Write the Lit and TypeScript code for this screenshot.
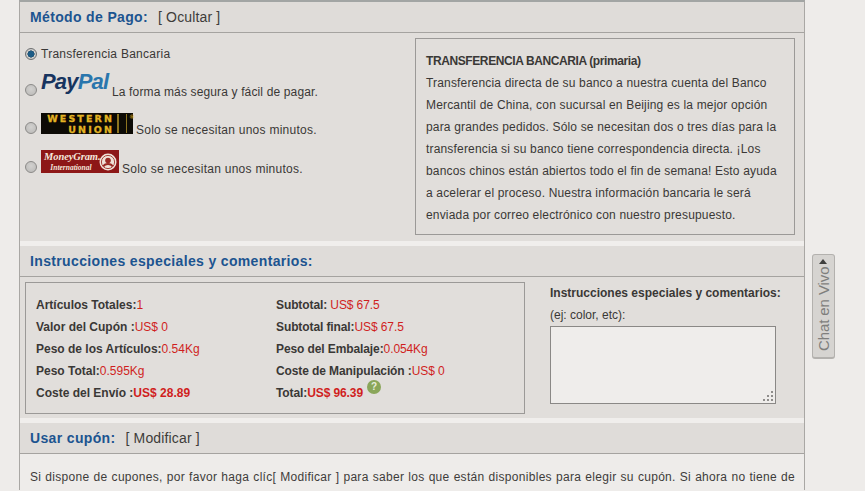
import { LitElement, html, css } from "lit";
import { customElement } from "lit/decorators.js";

@customElement("app-root")
export class AppRoot extends LitElement {
  static styles = css`
    :host {
      display: block;
      position: relative;
      width: 865px;
      height: 491px;
      overflow: hidden;
      background: #eeecea;
      font-family: "Liberation Sans", Arial, sans-serif;
      font-size: 12px;
      color: #3a3836;
    }
    .page {
      width: 786px;
      margin-left: 19px;
      border-left: 1px solid #a9a7a4;
      border-right: 1px solid #a9a7a4;
      border-top: 2px solid #a2a5a4;
      box-sizing: border-box;
    }
    .head {
      box-sizing: border-box;
      border-bottom: 1px solid #a5a3a0;
      background: #dfdcd9;
      display: flex;
      align-items: center;
      padding-left: 10px;
      height: 31px;
    }
    .head h2 {
      margin: 0;
      font-size: 14px;
      font-weight: bold;
      color: #1c5490;
      letter-spacing: 0.35px;
    }
    .head a {
      margin-left: 10px;
      font-size: 14px;
      letter-spacing: 0.15px;
      color: #3e3c3a;
    }
    .body {
      background: #e1dedb;
    }
    .pay {
      display: flex;
      justify-content: space-between;
      height: 208px;
      box-sizing: border-box;
      padding: 5px 9px 5px 5px;
    }
    .methods {
      display: flex;
      flex-direction: column;
      padding-top: 10px;
    }
    .method {
      display: flex;
      align-items: flex-end;
      letter-spacing: 0.26px;
    }
    .method.m0 { height: 12px; align-items: center; }
    .method.m1 { margin-top: 11px; letter-spacing: 0.14px; }
    .method.m2 { margin-top: 17px; }
    .method.m3 { margin-top: 16px; }
    .method .t { margin-bottom: -3px; }
    input {
      appearance: none;
      width: 12px;
      height: 12px;
      margin: 0 4px 0 0;
      border-radius: 50%;
      border: 1px solid #8b8a88;
      box-sizing: border-box;
      background: radial-gradient(circle at 50% 40%, #d2d1cf 0, #b9b8b6 100%);
      flex: none;
    }
    input:checked {
      background: radial-gradient(circle, #1d5c86 0 2.8px, #123a55 3.3px, #d4d4d2 3.8px, #aeadab 100%);
      border-color: #6f7172;
    }
    .paypal {
      font-size: 22px;
      line-height: 22px;
      font-weight: bold;
      font-style: italic;
      color: #17345f;
      letter-spacing: -0.8px;
      width: 71px;
      flex: none;
      white-space: nowrap;
      margin-bottom: 3px;
    }
    .paypal span { color: #2a76ad; }
    .wu {
      flex: none;
      width: 92px;
      height: 21px;
      background: #0c0a05;
      color: #e3b323;
      font-family: "DejaVu Sans", sans-serif;
      font-weight: bold;
      font-size: 9.5px;
      line-height: 11px;
      letter-spacing: 2.1px;
      -webkit-text-stroke: 0.3px #e3b323;
      display: flex;
      margin-right: 3px;
      box-sizing: border-box;
      padding: 0 0 0 2px;
    }
    .wu .name { width: 71px; text-align: right; flex: none; margin-right: -2px; }
    .wu .bars {
      flex: none;
      margin-left: 5px;
      width: 10px;
      margin-top: 1px;
      height: 19px;
      box-sizing: border-box;
      border-left: 2px solid #8d7420;
      border-right: 1px solid #8d7420;
    }
    .wu .mark { font-size: 6px; line-height: 8px; margin-left: 2px; font-weight: normal; letter-spacing: 0; -webkit-text-stroke: 0; }
    .mg {
      flex: none;
      width: 78px;
      height: 23px;
      background: #8d1717;
      color: #f3e6dc;
      font-family: "Liberation Serif", serif;
      font-style: italic;
      font-weight: bold;
      display: flex;
      align-items: center;
      margin-right: 3px;
      box-sizing: border-box;
      padding-left: 3px;
      gap: 1px;
      letter-spacing: 0;
    }
    .mg .txt {
      width: 54px;
      text-align: center;
      font-size: 10.5px;
      line-height: 11.5px;
      letter-spacing: -0.1px;
      white-space: nowrap;
    }
    .mg .txt small { display: block; font-size: 7.5px; line-height: 9.5px; letter-spacing: 0; }
    .mg svg { flex: none; }
    .info {
      width: 380px;
      height: 197px;
      box-sizing: border-box;
      border: 1px solid #9b9997;
      padding: 11px 10px 0;
      line-height: 22px;
      letter-spacing: 0.17px;
      white-space: nowrap;
    }
    .info b { display: block; letter-spacing: -0.4px; }
    .strip { height: 5px; background: #f0eeec; }
    .notes {
      display: flex;
      height: 141px;
      box-sizing: border-box;
      padding: 5px 0 0 5px;
    }
    .stats {
      width: 500px;
      height: 132px;
      box-sizing: border-box;
      border: 1px solid #9b9997;
      padding: 11px 0 0 10px;
      display: grid;
      grid-template-columns: 240px 1fr;
      grid-auto-rows: 22px;
      align-items: center;
      font-weight: bold;
      white-space: nowrap;
    }
    .stats .r { letter-spacing: -0.1px; }
    .stats em { font-style: normal; font-weight: normal; color: #d01e1e; }
    .stats em.b { font-weight: bold; }
    .help {
      display: inline-block;
      width: 14px;
      height: 14px;
      margin: -6px 0 -6px 4px;
      border-radius: 50%;
      background: #8aa65a;
      color: #e8eddc;
      font-size: 10px;
      line-height: 14px;
      text-align: center;
      vertical-align: 7px;
      letter-spacing: 0;
    }
    .side {
      margin-left: 25px;
      width: 236px;
    }
    .side b, .side .hint {
      display: block;
      height: 22px;
      box-sizing: border-box;
      padding-top: 1px;
      line-height: 21px;
      white-space: nowrap;
    }
    .box { position: relative; width: 226px; height: 78px; }
    textarea {
      display: block;
      width: 226px;
      height: 78px;
      box-sizing: border-box;
      margin: 0;
      border: 1px solid #8a8886;
      background: #efedeb;
      border-radius: 0;
      resize: none;
    }
    .grip { position: absolute; right: 1px; bottom: 1px; }
    .coupon {
      background: #eeecea;
      padding: 12px 9px 0 10px;
      height: 36px;
      box-sizing: border-box;
      line-height: 22px;
      text-align: justify;
      text-align-last: justify;
      letter-spacing: 0.3px;
      color: #3e3c3a;
    }
    .chat {
      position: absolute;
      left: 812px;
      top: 254px;
      width: 23px;
      height: 105px;
      box-sizing: border-box;
      border: 1px solid #b3b1ae;
      border-top-width: 2px;
      border-radius: 3px;
      background: #d6d4d1;
      color: #7f7f7d;
      font-size: 15px;
      writing-mode: vertical-rl;
      transform: rotate(180deg);
      display: flex;
      align-items: center;
      justify-content: flex-start;
      white-space: nowrap;
      padding: 6px 0 0;
      letter-spacing: -0.1px;
    }
    .chat i {
      display: block;
      width: 0;
      height: 0;
      margin-top: 3px;
      border-top: 5px solid #3f3f3d;
      border-left: 4px solid transparent;
      border-right: 4px solid transparent;
    }
  `;

  render() {
    return html`
      <div class="page">
        <div class="head"><h2>Método de Pago:</h2><a>[ Ocultar ]</a></div>
        <div class="body pay">
          <div class="methods">
            <label class="method m0"><input type="radio" name="p" checked /><span>Transferencia Bancaria</span></label>
            <label class="method m1"><input type="radio" name="p" /><span class="paypal">Pay<span>Pal</span></span><span class="t">La forma más segura y fácil de pagar.</span></label>
            <label class="method m2"><input type="radio" name="p" /><span class="wu"><span class="name">WESTERN<br />UNION</span><span class="bars"></span><span class="mark">®</span></span><span class="t">Solo se necesitan unos minutos.</span></label>
            <label class="method m3"><input type="radio" name="p" /><span class="mg"><span class="txt">MoneyGram.<small>International</small></span>
              <svg width="18" height="18" viewBox="0 0 18 18"><circle cx="9" cy="9" r="8.5" fill="#efe3d8"/><circle cx="9" cy="9" r="6.6" fill="none" stroke="#a8443c" stroke-width="1"/><circle cx="9" cy="7.5" r="2.8" fill="#9a2a24"/><path d="M4.5 13.5c1.2-3.4 7.8-3.4 9 0" fill="none" stroke="#9a2a24" stroke-width="2"/></svg>
            </span><span class="t">Solo se necesitan unos minutos.</span></label>
          </div>
          <div class="info">
            <b>TRANSFERENCIA BANCARIA (primaria)</b>
            Transferencia directa de su banco a nuestra cuenta del Banco<br />
            Mercantil de China, con sucursal en Beijing es la mejor opción<br />
            para grandes pedidos. Sólo se necesitan dos o tres días para la<br />
            transferencia si su banco tiene correspondencia directa. ¡Los<br />
            bancos chinos están abiertos todo el fin de semana! Esto ayuda<br />
            a acelerar el proceso. Nuestra información bancaria le será<br />
            enviada por correo electrónico con nuestro presupuesto.
          </div>
        </div>
        <div class="strip"></div>
        <div class="head"><h2>Instrucciones especiales y comentarios:</h2></div>
        <div class="body notes">
          <div class="stats">
            <div>Artículos Totales:<em>1</em></div><div class="r">Subtotal: <em>US$ 67.5</em></div>
            <div>Valor del Cupón :<em>US$ 0</em></div><div class="r">Subtotal final:<em>US$ 67.5</em></div>
            <div>Peso de los Artículos:<em>0.54Kg</em></div><div class="r">Peso del Embalaje:<em>0.054Kg</em></div>
            <div>Peso Total:<em>0.595Kg</em></div><div class="r">Coste de Manipulación :<em>US$ 0</em></div>
            <div>Coste del Envío :<em class="b">US$ 28.89</em></div><div class="r">Total:<em class="b">US$ 96.39</em><span class="help">?</span></div>
          </div>
          <div class="side">
            <b>Instrucciones especiales y comentarios:</b>
            <div class="hint">(ej: color, etc):</div>
            <div class="box">
              <textarea></textarea>
              <svg class="grip" width="13" height="13" viewBox="0 0 13 13" fill="#8f8d8b"><rect x="9" y="1" width="2" height="2"/><rect x="5" y="5" width="2" height="2"/><rect x="9" y="5" width="2" height="2"/><rect x="1" y="9" width="2" height="2"/><rect x="5" y="9" width="2" height="2"/><rect x="9" y="9" width="2" height="2"/></svg>
            </div>
          </div>
        </div>
        <div class="strip"></div>
        <div class="head"><h2>Usar cupón:</h2><a>[ Modificar ]</a></div>
        <div class="coupon">Si dispone de cupones, por favor haga clíc[ Modificar ] para saber los que están disponibles para elegir su cupón. Si ahora no tiene de</div>
      </div>
      <div class="chat">Chat en Vivo<i></i></div>
    `;
  }
}
